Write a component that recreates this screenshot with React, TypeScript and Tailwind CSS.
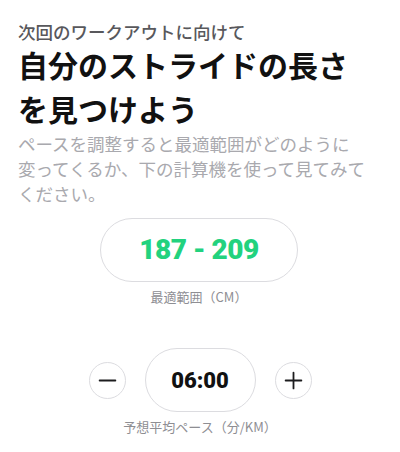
import { Minus, Plus } from "lucide-react";

const jp = "font-['Noto_Sans_CJK_JP',sans-serif]";

function StepButton({ children }: { children: React.ReactNode }) {
  return (
    <button className="flex h-[37px] w-[37px] items-center justify-center rounded-full border border-[#dcdce0] bg-white text-[#1c1c1e]">
      {children}
    </button>
  );
}

export default function App() {
  return (
    <div lang="ja" className={`h-[452px] w-[400px] overflow-hidden bg-white ${jp}`}>
      <div className="pl-[18px] pr-[30px] pt-[22px]">
        <p className="text-[17.5px] font-medium leading-[20px] text-[#58585c]">
          次回のワークアウトに向けて
        </p>
        <h1 className="text-[30px] font-bold leading-[44px] text-[#111111]">
          自分のストライドの長さを見つけよう
        </h1>
        <p className="mt-[1px] text-[17.5px] leading-[25px] text-[#a9a9ae]">
          ペースを調整すると最適範囲がどのように
          <br />
          変ってくるか、下の計算機を使って見てみてください。
        </p>
      </div>

      <div className="mt-[12px] flex flex-col items-center pr-[2px]">
        <div className="flex h-[64px] w-[198px] items-center justify-center rounded-full border border-[#dcdce0]">
          <span className="font-['Roboto',sans-serif] text-[28px] font-black tracking-[-0.5px] text-[#22d27e]">
            187 - 209
          </span>
        </div>
        <p className="mt-[6px] text-[13px] leading-[18px] text-[#8e8e93]">
          最適範囲（CM）
        </p>
      </div>

      <div className="mt-[42px] flex flex-col items-center">
        <div className="flex items-center gap-[19px]">
          <StepButton>
            <Minus className="h-[27px] w-[27px]" strokeWidth={1.6} />
          </StepButton>
          <div className="flex h-[64px] w-[111px] items-center justify-center rounded-full border border-[#dcdce0]">
            <span className="font-['Roboto',sans-serif] text-[22px] font-black text-[#111111]">
              06:00
            </span>
          </div>
          <StepButton>
            <Plus className="h-[27px] w-[27px]" strokeWidth={1.6} />
          </StepButton>
        </div>
        <p className="mt-[6px] text-[13px] leading-[18px] text-[#8e8e93]">
          予想平均ペース（分/KM）
        </p>
      </div>
    </div>
  );
}
